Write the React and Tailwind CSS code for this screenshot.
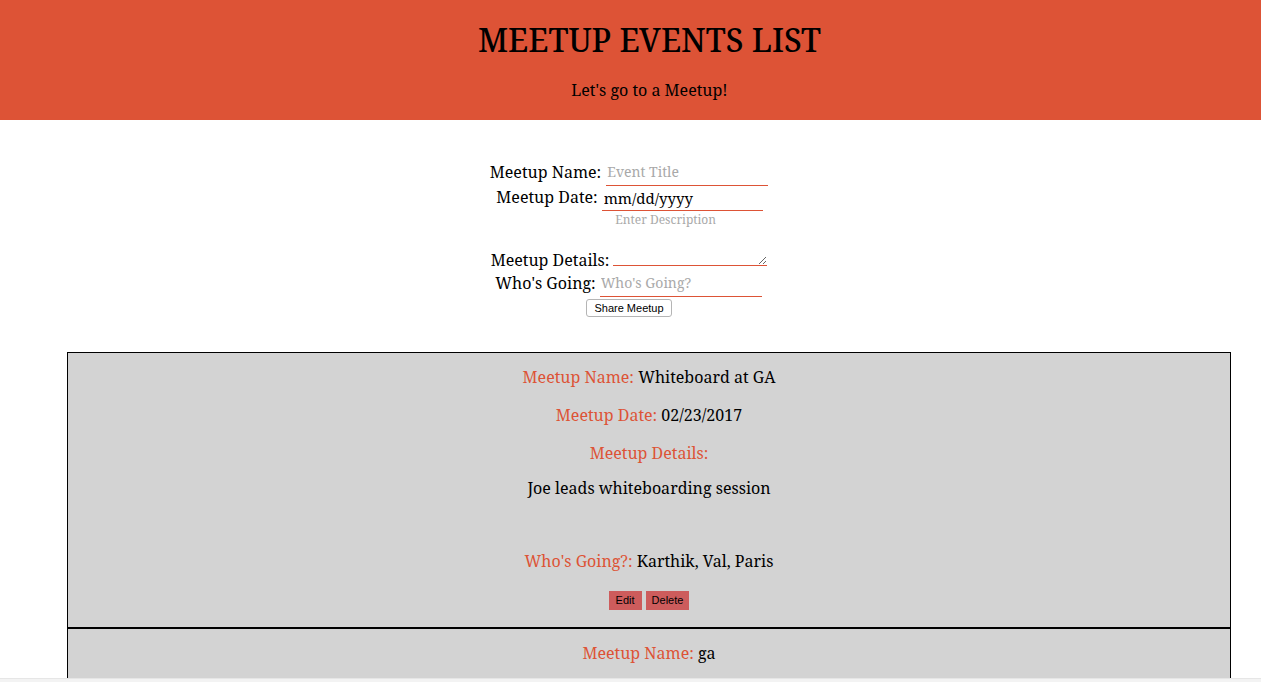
export default function App() {
  const serif = { fontFamily: '"Noto Serif", "DejaVu Serif", serif' };
  const sans = { fontFamily: '"Liberation Sans", Arial, sans-serif' };
  const events = [
    { name: "Whiteboard at GA", date: "02/23/2017", details: "Joe leads whiteboarding session", going: "Karthik, Val, Paris" },
    { name: "ga", date: "", details: "", going: "" },
  ];
  return (
    <div className="relative h-[682px] overflow-hidden bg-white text-black" style={serif}>
      <header className="h-[120px] bg-[#dd5336] flex flex-col items-center pl-[38px]">
        <h1 className="mt-[22px] text-[32px] leading-[36px] font-medium">MEETUP EVENTS LIST</h1>
        <p className="mt-[21px] text-[16px] leading-[22px]">Let's go to a Meetup!</p>
      </header>

      <form className="flex flex-col items-center pt-[38px] text-[16px]">
        <div className="flex items-end gap-[5px] ml-[-3px]">
          <label className="leading-[22px] mb-[3px]">Meetup Name:</label>
          <input
            placeholder="Event Title"
            className="w-[162px] h-[28px] px-[1px] bg-transparent border-b border-[#dd5336] outline-none text-[14px] placeholder:text-[#a9a9a9]"
            style={serif}
          />
        </div>
        <div className="flex items-end gap-[4px] ml-[-2px]">
          <label className="leading-[22px] mb-[3px]">Meetup Date:</label>
          <input
            defaultValue="mm/dd/yyyy"
            className="w-[161px] h-[25px] px-[2px] bg-transparent border-b border-[#dd5336] outline-none text-[15px]"
            style={serif}
          />
        </div>
        <div className="flex items-end gap-[4px] ml-[-3px]">
          <label className="leading-[20px] mb-[-4px]">Meetup Details:</label>
          <textarea
            placeholder="Enter Description"
            className="w-[154px] h-[55px] px-[2px] pt-[1px] bg-transparent border-b border-[#dd5336] outline-none text-[12px] leading-[15px] placeholder:text-[#a9a9a9] resize-y"
            style={serif}
          />
        </div>
        <div className="flex items-end gap-[4px] mt-[3px] ml-[-4px]">
          <label className="leading-[22px] mb-[3px]">Who's Going:</label>
          <input
            placeholder="Who's Going?"
            className="w-[162px] h-[28px] px-[1px] bg-transparent border-b border-[#dd5336] outline-none text-[14px] placeholder:text-[#a9a9a9]"
            style={serif}
          />
        </div>
        <button
          type="button"
          className="mt-[2px] ml-[-3px] h-[18px] px-[7px] text-[11px] leading-[16px] bg-white border border-[#b5b5b5] rounded-[3px]"
          style={sans}
        >
          Share Meetup
        </button>
      </form>

      <div className="ml-[67px] mr-[30px] mt-[35px]">
        {events.map((e, i) => (
          <div key={i} className="bg-[#d3d3d3] border border-black text-center text-[16px] leading-[22px] pt-[1px] pb-[17px]">
            <p className="my-[12px]"><span className="text-[#dd5336]">Meetup Name:</span> {e.name}</p>
            {i === 0 && (
              <>
                <p className="my-[16px]"><span className="text-[#dd5336]">Meetup Date:</span> {e.date}</p>
                <p className="mt-[16px] mb-[13px]"><span className="text-[#dd5336]">Meetup Details:</span></p>
                <p className="mt-[13px] mb-[51px]">{e.details}</p>
                <p className="mt-[16px] mb-[19px]"><span className="text-[#dd5336]">Who's Going?:</span> {e.going}</p>
                <div className="flex justify-center gap-[4px] mt-[19px]" style={sans}>
                  <button className="h-[19px] px-[7px] bg-[#cd5c5c] text-[11px] leading-[19px] text-black">Edit</button>
                  <button className="h-[19px] px-[6px] bg-[#cd5c5c] text-[11px] leading-[19px] text-black">Delete</button>
                </div>
              </>
            )}
          </div>
        ))}
      </div>
      <div className="absolute bottom-0 left-0 right-0 h-[4px] bg-[#f3f3f3] border-t border-[#e6e6e6]" />
    </div>
  );
}
